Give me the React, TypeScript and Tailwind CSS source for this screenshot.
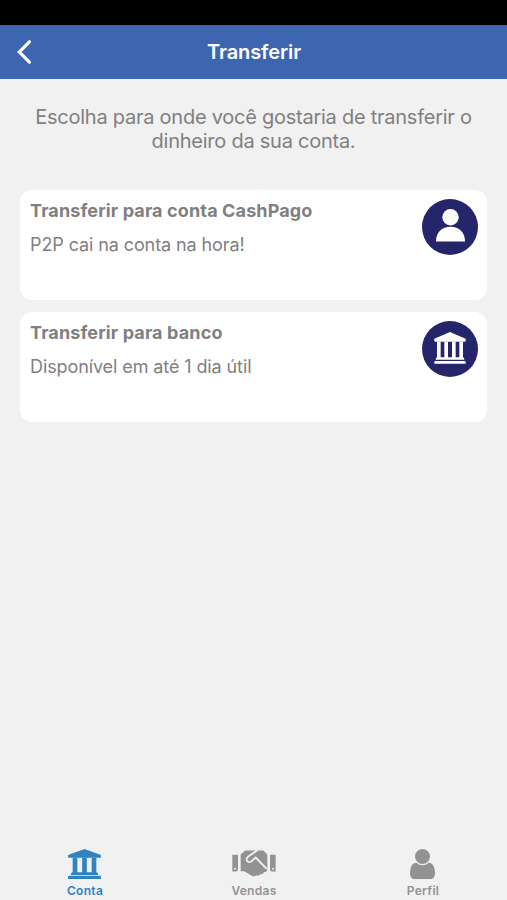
import { useState } from "react";
import type { ReactNode } from "react";

type IconProps = { className?: string };

const BankIcon = ({ className }: IconProps) => (
  <svg viewBox="0 0 94 96" fill="currentColor" className={className}>
    <path d="M47 0 94 20v6q0 3-4 3H4q-4 0-4-3v-6z" />
    <path d="M8 29h11v47h11V29h11v47h12V29h11v47h11V29h11v47q4 1 4 7H4q0-6 4-7z" />
    <path d="M3 87h88q3 0 3 3v5H0v-5q0-3 3-3z" />
  </svg>
);

const AccountIcon = ({ className }: IconProps) => (
  <svg viewBox="0 0 99 90" fill="currentColor" className={className}>
    <path d="M49.5 0 97 17q2 1 2 3v3q0 3-3 3H3q-3 0-3-3v-3q0-2 2-3z" />
    <path d="M14 26h14v44h14.5V26h14v44H71V26h14v44q6 1 6 8H8q0-7 6-8z" />
    <path d="M4 80h91q4 0 4 4v6H0v-6q0-4 4-4z" />
  </svg>
);

const HandshakeIcon = ({ className }: IconProps) => (
  <svg viewBox="0 0 132 80" fill="none" className={className}>
    <path
      fill="currentColor"
      fillRule="evenodd"
      d="M1 14h17v44q0 6-6 6H1zM9 53a3 3 0 1 0 0 6 3 3 0 0 0 0-6zM131 14h-17v44q0 6 6 6h11zM123 53a3 3 0 1 0 0 6 3 3 0 0 0 0-6z"
    />
    <path
      fill="currentColor"
      d="M40 1h54l12 12v44q-1 9-10 9-2 7-11 6-5 7-12 3-7 6-14 2L37 63H26V13z"
    />
    <path
      stroke="#f1f1f1"
      strokeWidth="5.5"
      strokeLinejoin="round"
      d="M76 0 48 20q-8 8-1 14 6 4 12-1l12-11 33 34"
    />
  </svg>
);

const UserIcon = ({ className }: IconProps) => (
  <svg viewBox="0 128 1280 1536" fill="currentColor" className={className}>
    <path d="M1280 1399q0 109-62.5 187t-150.5 78h-854q-88 0-150.5-78t-62.5-187q0-85 8.5-160.5t31.5-152 58.5-131 94-89 134.5-34.5q131 128 313 128t313-128q76 0 134.5 34.5t94 89 58.5 131 31.5 152 8.5 160.5zM1024 512q0 159-112.5 271.5t-271.5 112.5-271.5-112.5-112.5-271.5 112.5-271.5 271.5-112.5 271.5 112.5 112.5 271.5z" />
  </svg>
);

const PersonIcon = ({ className }: IconProps) => (
  <svg viewBox="0 0 29 33" fill="currentColor" className={className}>
    <circle cx="14.5" cy="8.3" r="8.2" />
    <path d="M0 32.4C0 23.5 5.8 17.8 14.5 17.8S29 23.5 29 32.4Z" />
  </svg>
);

type OptionCardProps = {
  title: string;
  description: string;
  icon: ReactNode;
};

const OptionCard = ({ title, description, icon }: OptionCardProps) => (
  <button className="flex h-[110px] w-full items-start justify-between rounded-[12px] bg-white pt-[9px] pr-[9px] pl-[10px] text-left">
    <div className="text-[#808080]">
      <p className="text-[18px] leading-[24px] font-bold tracking-[0.13px]">
        {title}
      </p>
      <p className="mt-[10px] text-[18px] leading-[24px] tracking-[-0.1px]">
        {description}
      </p>
    </div>
    <div className="flex size-[56px] items-center justify-center rounded-full bg-[#25256b] text-white">
      {icon}
    </div>
  </button>
);

const tabs = [
  { name: "Conta", icon: <AccountIcon className="h-[30px] w-[33px]" /> },
  { name: "Vendas", icon: <HandshakeIcon className="h-[27px] w-[44px]" /> },
  { name: "Perfil", icon: <UserIcon className="h-[30px] w-[25px]" /> },
];

const App = () => {
  const [activeTab, setActiveTab] = useState<string>("Conta");

  return (
    <div className="flex h-[900px] w-full flex-col bg-[#f1f1f1] font-['Inter',sans-serif]">
      {/* Status bar */}
      <div className="h-[25px] bg-black" />

      {/* Header */}
      <header className="grid h-[54px] grid-cols-[1fr_auto_1fr] items-center bg-[#3d66b0] text-white">
        <button className="pl-[17px]">
          <svg
            viewBox="0 0 14 24"
            fill="none"
            stroke="currentColor"
            strokeWidth="3.2"
            strokeLinecap="round"
            className="h-[24px] w-[14px]">
            <path d="M12.4 1.8 2.2 12l10.2 10.2" />
          </svg>
        </button>
        <h1 className="pl-px text-[20px] font-semibold tracking-[-0.1px]">
          Transferir
        </h1>
      </header>

      <main className="flex-1 px-[20px] pt-[26px]">
        <p className="text-center text-[20px] leading-[24px] tracking-[-0.25px] text-[#808080]">
          Escolha para onde você gostaria de transferir o
          <br />
          dinheiro da sua conta.
        </p>

        <div className="mt-[37px] flex flex-col gap-[12px]">
          <OptionCard
            title="Transferir para conta CashPago"
            description="P2P cai na conta na hora!"
            icon={<PersonIcon className="mb-[4px] h-[33px] w-[29px]" />}
          />
          <OptionCard
            title="Transferir para banco"
            description="Disponível em até 1 dia útil"
            icon={<BankIcon className="mb-[2px] h-[32px] w-[32px]" />}
          />
        </div>
      </main>

      {/* Bottom tabs */}
      <nav className="grid h-[54px] grid-cols-3">
        {tabs.map((tab) => (
          <button
            key={tab.name}
            onClick={() => setActiveTab(tab.name)}
            className={`flex flex-col items-center ${
              activeTab === tab.name ? "text-[#2e83c0]" : "text-[#929292]"
            }`}>
            <span className="flex h-[35px] items-center">{tab.icon}</span>
            <span className="mt-[2px] pl-px text-[12px] leading-[16px] font-semibold tracking-[0.3px]">
              {tab.name}
            </span>
          </button>
        ))}
      </nav>
    </div>
  );
};

export default App;
